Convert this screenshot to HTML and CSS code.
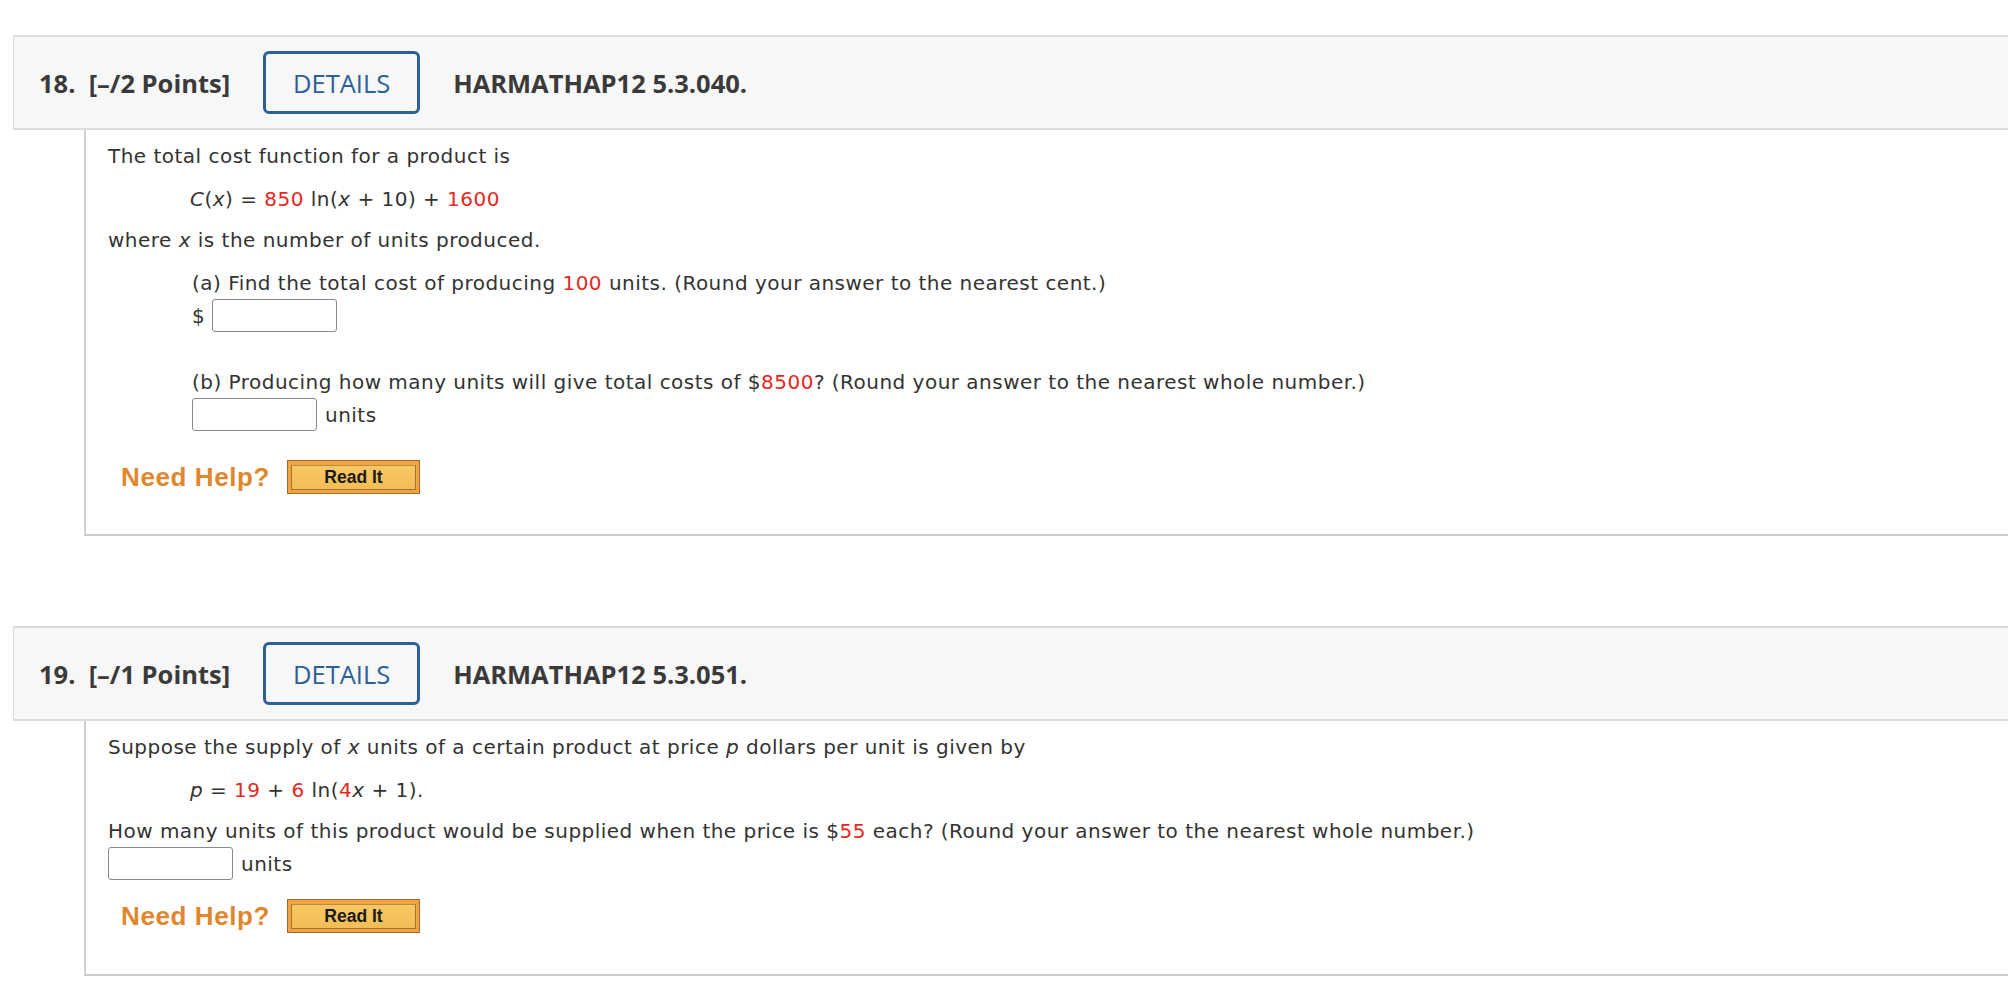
FILE: index.html
```html
<!DOCTYPE html>
<html>
<head>
<meta charset="utf-8">
<link rel="stylesheet" href="styles.css">
</head>
<body>
<div class="question q18">
  <div class="qhead">
    <span class="qnum">18.&nbsp; [–/2 Points]</span>
    <span class="details">DETAILS</span>
    <span class="qid">HARMATHAP12 5.3.040.</span>
  </div>
  <div class="qbody body18">
    <p class="line first">The total cost function for a product is</p>
    <p class="line eq"><i>C</i>(<i>x</i>) = <span class="red">850</span> ln(<i>x</i> + 10) + <span class="red">1600</span></p>
    <p class="line gap">where <i>x</i> is the number of units produced.</p>
    <div class="part">
      <p class="line gap">(a) Find the total cost of producing <span class="red">100</span> units. (Round your answer to the nearest cent.)</p>
      <div class="answer"><span class="dollar">$</span><span class="box"></span></div>
      <p class="line partb">(b) Producing how many units will give total costs of $<span class="red">8500</span>? (Round your answer to the nearest whole number.)</p>
      <div class="answer"><span class="box"></span><span class="unit">units</span></div>
    </div>
    <div class="help help18">
      <span class="need">Need Help?</span>
      <span class="readit"><span class="readit-inner">Read It</span></span>
    </div>
  </div>
</div>

<div class="question q19">
  <div class="qhead">
    <span class="qnum">19.&nbsp; [–/1 Points]</span>
    <span class="details">DETAILS</span>
    <span class="qid">HARMATHAP12 5.3.051.</span>
  </div>
  <div class="qbody body19">
    <p class="line first">Suppose the supply of <i>x</i> units of a certain product at price <i>p</i> dollars per unit is given by</p>
    <p class="line eq"><i>p</i> = <span class="red">19</span> + <span class="red">6</span> ln(<span class="red">4</span><i>x</i> + 1).</p>
    <p class="line gap">How many units of this product would be supplied when the price is $<span class="red">55</span> each? (Round your answer to the nearest whole number.)</p>
    <div class="answer"><span class="box"></span><span class="unit">units</span></div>
    <div class="help help19">
      <span class="need">Need Help?</span>
      <span class="readit"><span class="readit-inner">Read It</span></span>
    </div>
  </div>
</div>
</body>
</html>
```

FILE: styles.css
```css
html, body {
  margin: 0;
  padding: 0;
  background: #ffffff;
}
body {
  width: 2008px;
  overflow: hidden;
  font-family: "DejaVu Sans", Verdana, sans-serif;
  color: #333333;
}
.question.q18 {
  padding-top: 35px;
}
.question.q19 {
  margin-top: 90px;
}
.qhead {
  margin-left: 13px;
  height: 91px;
  background: #f7f7f7;
  border-top: 2px solid #dcdcdc;
  border-bottom: 2px solid #dcdcdc;
  border-left: 1px solid #dcdcdc;
  display: flex;
  align-items: center;
  padding-left: 25px;
  font-family: "Open Sans", "Noto Sans", sans-serif;
  font-size: 25.5px;
  color: #3a3a3a;
}
.qnum {
  font-weight: 700;
}
.details {
  margin-left: 33px;
  width: 151px;
  height: 57px;
  border: 3px solid #2b6099;
  border-radius: 6px;
  display: flex;
  align-items: center;
  justify-content: center;
  color: #2b6099;
  font-weight: 400;
  font-size: 25.5px;
  box-sizing: content-box;
}
.qid {
  margin-left: 33px;
  font-weight: 700;
}
.qbody {
  margin-left: 84px;
  border-left: 2px solid #d0d0d0;
  border-bottom: 2px solid #cccccc;
  padding-left: 22px;
}
.body18 {
  padding-top: 13px;
  padding-bottom: 40px;
}
.body19 {
  padding-top: 13px;
  padding-bottom: 41px;
}
.line {
  margin: 0;
  font-size: 20px;
  line-height: 26px;
  letter-spacing: 0.48px;
  white-space: nowrap;
}
.line.eq {
  margin-top: 17px;
  padding-left: 82px;
}
.line.gap {
  margin-top: 15px;
}
.part {
  padding-left: 84px;
}
.part .line.gap {
  margin-top: 17px;
}
.line.partb {
  margin-top: 37px;
}
.red {
  color: #e8281e;
}
i {
  font-style: italic;
}
.answer {
  display: flex;
  align-items: center;
  margin-top: 3px;
  font-size: 20px;
  line-height: 26px;
  letter-spacing: 0.48px;
}
.dollar {
  width: 20px;
}
.box {
  width: 123px;
  height: 31px;
  border: 1px solid #8a8a8a;
  border-radius: 3px;
  background: #ffffff;
}
.unit {
  margin-left: 8px;
}
.help {
  display: flex;
  align-items: center;
  padding-left: 13px;
}
.help18 {
  margin-top: 29px;
}
.help19 {
  margin-top: 19px;
}
.need {
  font-family: "Liberation Sans", Arial, sans-serif;
  font-weight: 700;
  font-size: 26px;
  color: #e0872e;
  letter-spacing: 0.6px;
}
.readit {
  margin-left: 17px;
  border: 1px solid #a8692a;
  background: #efa343;
  display: flex;
  padding: 4px 3px 3px 3px;
  box-sizing: border-box;
  width: 133px;
  height: 34px;
}
.readit-inner {
  flex: 1;
  border: 1px solid #a7702e;
  border-top-color: #c08a40;
  background: linear-gradient(#f6c865, #f3bd55);
  display: flex;
  align-items: center;
  justify-content: center;
  font-family: "Liberation Sans", Arial, sans-serif;
  font-weight: 700;
  font-size: 17.5px;
  color: #1a1a1a;
}
```
